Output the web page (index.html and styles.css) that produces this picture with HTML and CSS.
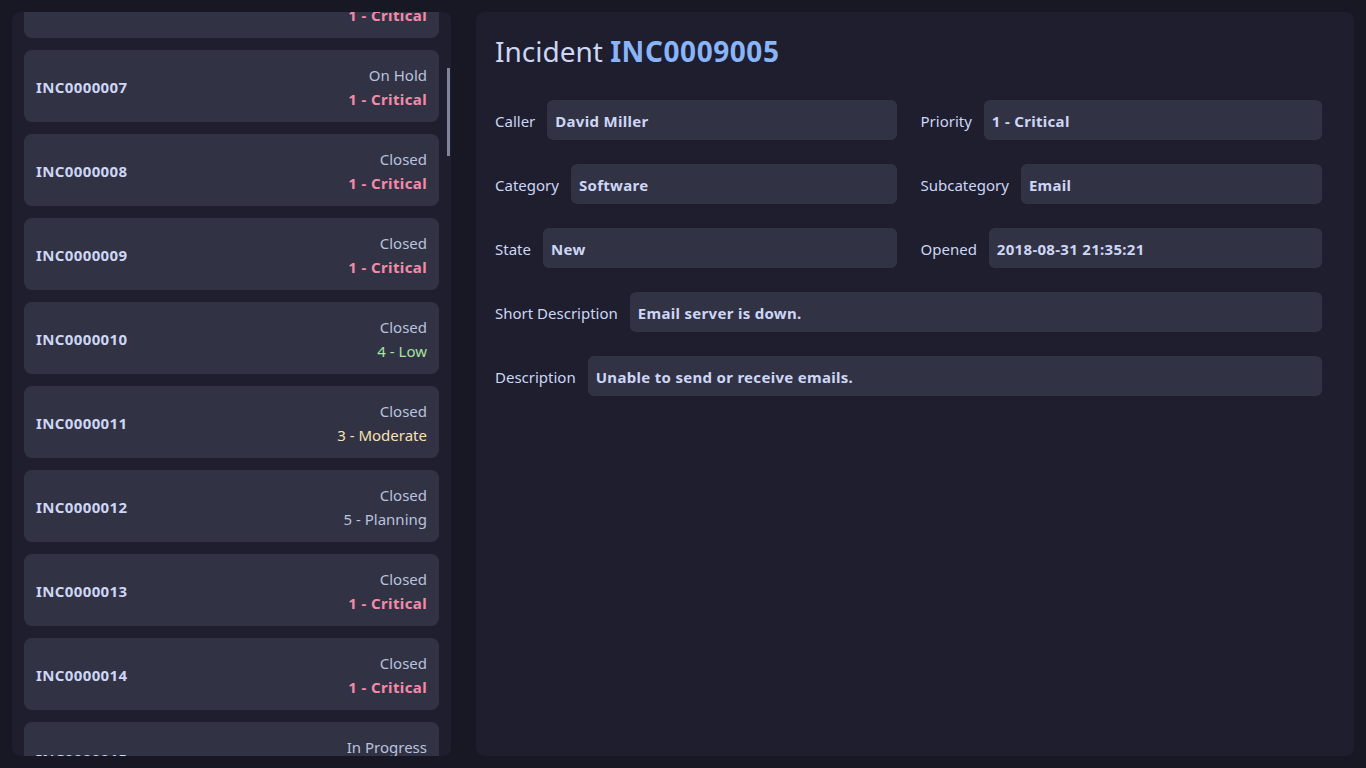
FILE: index.html
```html
<!DOCTYPE html>
<html lang="en">
<head>
<meta charset="utf-8">
<title>Incidents</title>
<link rel="stylesheet" href="styles.css">
</head>
<body>
<div class="app">
  <aside class="sidebar">
    <div class="list" id="list">
      <div class="card"><div class="card-id">INC0000001</div><div class="card-meta"><span class="status">Closed</span><span class="prio p1">1 - Critical</span></div></div>
      <div class="card"><div class="card-id">INC0000002</div><div class="card-meta"><span class="status">Closed</span><span class="prio p1">1 - Critical</span></div></div>
      <div class="card"><div class="card-id">INC0000003</div><div class="card-meta"><span class="status">In Progress</span><span class="prio p1">1 - Critical</span></div></div>
      <div class="card"><div class="card-id">INC0000004</div><div class="card-meta"><span class="status">Closed</span><span class="prio p4">4 - Low</span></div></div>
      <div class="card"><div class="card-id">INC0000005</div><div class="card-meta"><span class="status">Closed</span><span class="prio p3">3 - Moderate</span></div></div>
      <div class="card"><div class="card-id">INC0000006</div><div class="card-meta"><span class="status">Closed</span><span class="prio p1">1 - Critical</span></div></div>
      <div class="card"><div class="card-id">INC0000007</div><div class="card-meta"><span class="status">On Hold</span><span class="prio p1">1 - Critical</span></div></div>
      <div class="card"><div class="card-id">INC0000008</div><div class="card-meta"><span class="status">Closed</span><span class="prio p1">1 - Critical</span></div></div>
      <div class="card"><div class="card-id">INC0000009</div><div class="card-meta"><span class="status">Closed</span><span class="prio p1">1 - Critical</span></div></div>
      <div class="card"><div class="card-id">INC0000010</div><div class="card-meta"><span class="status">Closed</span><span class="prio p4">4 - Low</span></div></div>
      <div class="card"><div class="card-id">INC0000011</div><div class="card-meta"><span class="status">Closed</span><span class="prio p3">3 - Moderate</span></div></div>
      <div class="card"><div class="card-id">INC0000012</div><div class="card-meta"><span class="status">Closed</span><span class="prio p5">5 - Planning</span></div></div>
      <div class="card"><div class="card-id">INC0000013</div><div class="card-meta"><span class="status">Closed</span><span class="prio p1">1 - Critical</span></div></div>
      <div class="card"><div class="card-id">INC0000014</div><div class="card-meta"><span class="status">Closed</span><span class="prio p1">1 - Critical</span></div></div>
      <div class="card"><div class="card-id">INC0000015</div><div class="card-meta"><span class="status">In Progress</span><span class="prio p1">1 - Critical</span></div></div>
      <div class="card"><div class="card-id">INC0000016</div><div class="card-meta"><span class="status">Closed</span><span class="prio p2">2 - High</span></div></div>
    </div>
    <div class="thumb" id="thumb"></div>
  </aside>

  <main class="detail">
    <h1 class="title">Incident <strong class="title-id">INC0009005</strong></h1>
    <div class="form">
      <div class="field"><span class="label">Caller</span><div class="value">David Miller</div></div>
      <div class="field"><span class="label">Priority</span><div class="value">1 - Critical</div></div>
      <div class="field"><span class="label">Category</span><div class="value">Software</div></div>
      <div class="field"><span class="label">Subcategory</span><div class="value">Email</div></div>
      <div class="field"><span class="label">State</span><div class="value">New</div></div>
      <div class="field"><span class="label">Opened</span><div class="value">2018-08-31 21:35:21</div></div>
      <div class="field wide"><span class="label">Short Description</span><div class="value">Email server is down.</div></div>
      <div class="field wide"><span class="label">Description</span><div class="value">Unable to send or receive emails.</div></div>
    </div>
  </main>
</div>
<script src="script.js"></script>
</body>
</html>
```

FILE: styles.css
```css
* { box-sizing: border-box; }

html, body {
  margin: 0;
  height: 100%;
}

body {
  background: #181825;
  color: #cdd6f4;
  font-family: "Noto Sans", "Open Sans", sans-serif;
  font-size: 15px;
  overflow: hidden;
}

.app {
  display: grid;
  grid-template-columns: 1fr 2fr;
  gap: 25px;
  padding: 12px;
  height: 100vh;
}

.sidebar {
  position: relative;
  background: #1e1e2e;
  border-radius: 8px;
  overflow: hidden;
  min-height: 0;
}

.list {
  height: 100%;
  padding: 12px;
  overflow-y: auto;
  display: flex;
  flex-direction: column;
  gap: 12px;
  scrollbar-width: none;
}

.list::-webkit-scrollbar { display: none; }

.thumb {
  position: absolute;
  right: 1px;
  top: 0;
  width: 3px;
  height: 88px;
  background: #7f849c;
}

.card {
  flex: none;
  height: 72px;
  display: flex;
  align-items: center;
  justify-content: space-between;
  background: #313244;
  border-radius: 8px;
  padding: 13px 12px 11px;
  line-height: 24px;
}

.card-id {
  font-weight: 700;
  letter-spacing: 0.025em;
  color: #cdd6f4;
}

.card-meta {
  display: flex;
  flex-direction: column;
  align-items: flex-end;
}

.status { color: #bac2de; }
.prio { color: #bac2de; }
.prio.p1 { color: #f38ba8; font-weight: 700; letter-spacing: 0.025em; }
.prio.p2 { color: #fab387; font-weight: 700; letter-spacing: 0.025em; }
.prio.p3 { color: #f9e2af; }
.prio.p4 { color: #a6e3a1; }

.detail {
  background: #1e1e2e;
  border-radius: 8px;
  padding: 22px 32px 20px 19px;
  min-height: 0;
}

.title {
  margin: 0 0 32px;
  font-size: 28px;
  line-height: 34px;
  font-weight: 400;
  color: #cdd6f4;
}

.title-id {
  color: #89b4fa;
  font-weight: 700;
  letter-spacing: 0.02em;
}

.form {
  display: grid;
  grid-template-columns: 1fr 1fr;
  column-gap: 24px;
  row-gap: 24px;
}

.field {
  display: flex;
  align-items: center;
  gap: 12px;
}

.field.wide { grid-column: 1 / -1; }

.label {
  white-space: nowrap;
  color: #cdd6f4;
  padding-top: 2px;
}

.value {
  flex: 1;
  height: 40px;
  display: flex;
  align-items: center;
  padding: 2px 8px 0;
  background: #313244;
  border-radius: 6px;
  font-weight: 700;
  letter-spacing: 0.02em;
  color: #cdd6f4;
}
```

FILE: script.js
```js
(function () {
  var list = document.getElementById('list');
  var thumb = document.getElementById('thumb');
  var statuses = ['Closed', 'Closed', 'In Progress', 'Closed', 'On Hold', 'New'];
  var prios = [
    ['1 - Critical', 'p1'], ['4 - Low', 'p4'], ['3 - Moderate', 'p3'],
    ['1 - Critical', 'p1'], ['5 - Planning', 'p5'], ['2 - High', 'p2']
  ];
  for (var i = 17; i <= 75; i++) {
    var card = document.createElement('div');
    card.className = 'card';
    var id = document.createElement('div');
    id.className = 'card-id';
    id.textContent = 'INC' + String(i).padStart(7, '0');
    var meta = document.createElement('div');
    meta.className = 'card-meta';
    var s = document.createElement('span');
    s.className = 'status';
    s.textContent = statuses[i % statuses.length];
    var p = document.createElement('span');
    var pr = prios[i % prios.length];
    p.className = 'prio ' + pr[1];
    p.textContent = pr[0];
    meta.appendChild(s);
    meta.appendChild(p);
    card.appendChild(id);
    card.appendChild(meta);
    list.appendChild(card);
  }
  list.scrollTop = 478;
  function syncThumb() {
    var ch = list.clientHeight, sh = list.scrollHeight;
    var h = Math.max(24, ch * ch / sh);
    var t = list.scrollTop / (sh - ch) * (ch - h);
    thumb.style.height = h + 'px';
    thumb.style.top = t + 'px';
  }
  syncThumb();
  list.addEventListener('scroll', syncThumb);
})();
```
